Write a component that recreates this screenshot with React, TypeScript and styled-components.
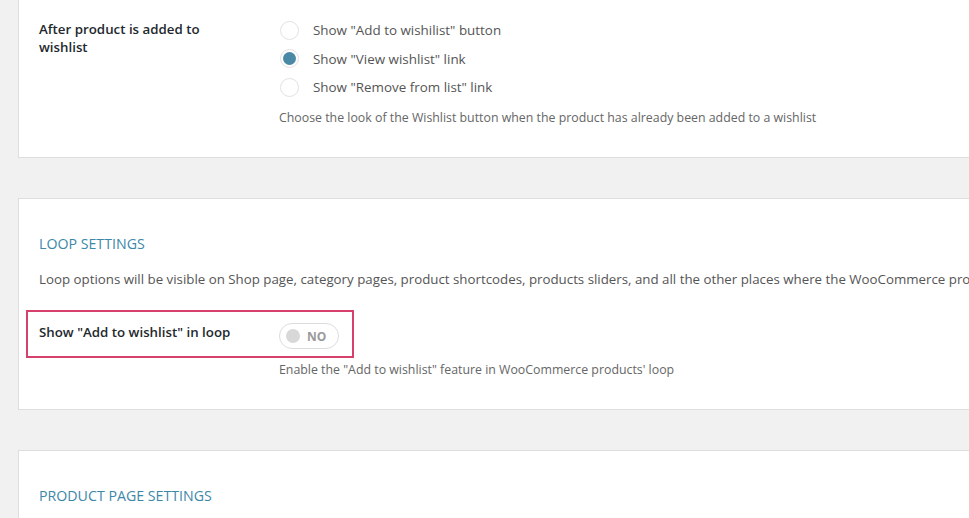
import React from "react";
import styled, { createGlobalStyle } from "styled-components";

const Global = createGlobalStyle`
  html, body { margin: 0; padding: 0; background: #f1f1f1; overflow: hidden; }
  body { font-family: "Open Sans", "Noto Sans", sans-serif; color: #444; }
`;

const Page = styled.div`
  width: 969px;
  height: 518px;
  overflow: hidden;
  padding-left: 18px;
  box-sizing: border-box;
`;

const Card = styled.section<{ $pt: number; $pb: number; $mt: number }>`
  position: relative;
  width: 1100px;
  box-sizing: border-box;
  background: #fff;
  border: 1px solid #dedede;
  margin-top: ${(p) => p.$mt}px;
  padding: ${(p) => p.$pt}px 20px ${(p) => p.$pb}px 20px;
`;

const Row = styled.div`
  display: grid;
  grid-template-columns: 240px 1fr;
  align-items: start;
`;

const Label = styled.div`
  width: 200px;
  font-size: 13.3px;
  line-height: 18px;
  font-weight: 600;
  color: #23282d;
`;

const RadioList = styled.div`
  display: flex;
  flex-direction: column;
  gap: 8.5px;
`;

const RadioItem = styled.label`
  display: flex;
  align-items: center;
  height: 20px;
  font-size: 13.4px;
  color: #555;
`;

const RadioCircle = styled.span<{ $checked?: boolean }>`
  width: 19px;
  height: 19px;
  border-radius: 50%;
  border: 1px solid #e2e2e2;
  box-sizing: border-box;
  margin-left: 1px;
  margin-right: 14px;
  display: flex;
  align-items: center;
  justify-content: center;
  &::after {
    content: "";
    width: 13px;
    height: 13px;
    border-radius: 50%;
    background: ${(p) => (p.$checked ? "#4a89a6" : "transparent")};
  }
`;

const Desc = styled.div<{ $mt: number }>`
  margin-top: ${(p) => p.$mt}px;
  font-size: 12.35px;
  line-height: 16px;
  color: #666;
`;

const Heading = styled.h3`
  margin: 0;
  font-size: 14.2px;
  line-height: 18px;
  font-weight: 400;
  color: #3d87a8;
  text-transform: uppercase;
`;

const Intro = styled.p`
  margin: 17px 0 0;
  font-size: 13.3px;
  line-height: 18px;
  color: #555;
  white-space: nowrap;
`;

const Toggle = styled.div`
  width: 60px;
  height: 26px;
  box-sizing: border-box;
  border: 1px solid #dcdcdc;
  border-radius: 13px;
  display: flex;
  align-items: center;
  padding-left: 6px;
  gap: 7px;
`;

const Knob = styled.span`
  width: 14px;
  height: 14px;
  border-radius: 50%;
  background: #d8d8d8;
`;

const ToggleText = styled.span`
  font-size: 12px;
  font-weight: 700;
  color: #9a9a9a;
`;

const LoopRow = styled.div`
  position: relative;
  margin-top: 35px;
`;

const Highlight = styled.div`
  position: absolute;
  left: -13px;
  top: -13px;
  width: 328px;
  height: 48px;
  box-sizing: border-box;
  border: 2px solid #d6406c;
  pointer-events: none;
`;

export default function App() {
  return (
    <Page>
      <Global />
      <Card $mt={-1} $pt={20} $pb={31}>
        <Row>
          <Label>After product is added to wishlist</Label>
          <div>
            <RadioList>
              <RadioItem>
                <RadioCircle />
                Show "Add to wishilist" button
              </RadioItem>
              <RadioItem>
                <RadioCircle $checked />
                Show "View wishlist" link
              </RadioItem>
              <RadioItem>
                <RadioCircle />
                Show "Remove from list" link
              </RadioItem>
            </RadioList>
            <Desc $mt={13}>
              Choose the look of the Wishlist button when the product has already been added to a wishlist
            </Desc>
          </div>
        </Row>
      </Card>
      <Card $mt={40} $pt={36} $pb={31}>
        <Heading>Loop settings</Heading>
        <Intro>
          Loop options will be visible on Shop page, category pages, product shortcodes, products sliders, and all the other places where the WooCommerce pro
        </Intro>
        <LoopRow>
          <Highlight />
          <Row>
            <Label>Show "Add to wishlist" in loop</Label>
            <div>
              <Toggle>
                <Knob />
                <ToggleText>NO</ToggleText>
              </Toggle>
              <Desc $mt={13}>Enable the "Add to wishlist" feature in WooCommerce products' loop</Desc>
            </div>
          </Row>
        </LoopRow>
      </Card>
      <Card $mt={40} $pt={36} $pb={40}>
        <Heading>Product page settings</Heading>
      </Card>
    </Page>
  );
}
